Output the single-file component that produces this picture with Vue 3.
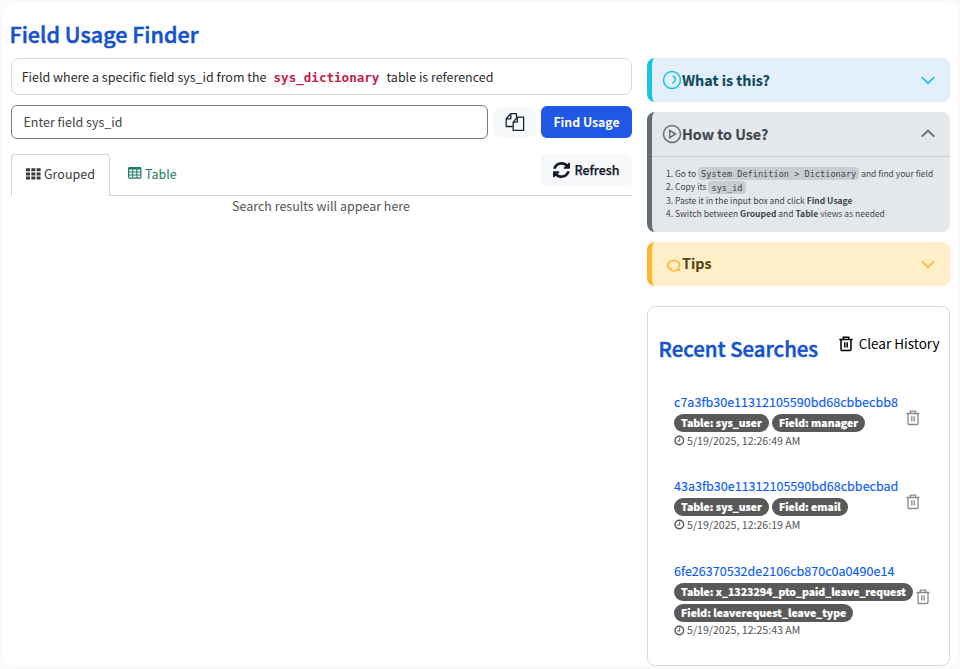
<script setup>
const searches = [
  { id: 'c7a3fb30e11312105590bd68cbbecbb8', table: 'sys_user', field: 'manager', time: '5/19/2025, 12:26:49 AM' },
  { id: '43a3fb30e11312105590bd68cbbecbad', table: 'sys_user', field: 'email', time: '5/19/2025, 12:26:19 AM' },
  { id: '6fe26370532de2106cb870c0a0490e14', table: 'x_1323294_pto_paid_leave_request', field: 'leaverequest_leave_type', time: '5/19/2025, 12:25:43 AM' },
]
</script>

<template>
  <div class="page">
    <main class="shell">
      <h1 class="title"><span>Field Usage Finder</span></h1>
      <div class="columns">
        <section class="left">
          <div class="info"><span class="t1">Field where a specific field sys_id from the</span><code>sys_dictionary</code><span class="t2">table is referenced</span></div>
          <div class="search">
            <div class="input"><span>Enter field sys_id</span></div>
            <button class="copy" aria-label="Copy">
              <svg width="20" height="20" viewBox="0 0 20 20" fill="none" stroke="currentColor" stroke-width="1.300" stroke-linejoin="round">
                <path d="M7.800 14.500H1.200V6.800L5.800 1.700H11.500V5.500M5.800 1.700V6.800H1.200" />
                <path d="M8.200 10.200L12.300 5.200H18.600V18.400H8.200ZM12.300 5.200V10.200H8.200" />
              </svg>
            </button>
            <button class="find"><span>Find Usage</span></button>
          </div>
          <div class="tabs">
            <div class="tab active">
              <svg width="15" height="12" viewBox="0 0 15 12" fill="currentColor">
                <path d="M0 .3h4v3H0zM5.300 .3h4v3h-4zM10.600 .3h4v3h-4zM0 4.400h4v3H0zM5.300 4.400h4v3h-4zM10.600 4.400h4v3h-4zM0 8.500h4v3H0zM5.300 8.500h4v3h-4zM10.600 8.500h4v3h-4z" />
              </svg>
              <span>Grouped</span>
            </div>
            <div class="tab link">
              <svg width="14" height="12" viewBox="0 0 14 12" fill="none" stroke="currentColor">
                <rect x=".6" y=".6" width="12.300" height="10.500" rx="1" stroke-width="1.200" />
                <path d="M.5 1.500H13" stroke-width="2" /><path d="M.5 5H13M.5 8H13M4.700 1V11M8.800 1V11" />
              </svg>
              <span>Table</span>
            </div>
            <div class="rest">
              <button class="refresh">
                <svg width="17" height="16" viewBox="0 0 1536 1536" preserveAspectRatio="none" fill="currentColor">
                  <path d="M1511 928q0 5-1 7-64 268-268 434.500T764 1536q-146 0-282.500-55T238 1324l-129 129q-19 19-45 19t-45-19-19-45V960q0-26 19-45t45-19h448q26 0 45 19t19 45-19 45l-137 137q71 66 161 102t187 36q134 0 250-65t186-179q11-17 53-117 8-23 30-23h192q13 0 22.500 9.500t9.500 22.500zm25-800v448q0 26-19 45t-45 19h-448q-26 0-45-19t-19-45 19-45l138-138Q969 256 768 256q-134 0-250 65T332 500q-11 17-53 117-8 23-30 23H50q-13 0-22.500-9.500T18 608v-7q65-268 270-434.500T768 0q146 0 284 55.500T1297 212l130-129q19-19 45-19t45 19 19 45z" />
                </svg>
                <span>Refresh</span>
              </button>
            </div>
          </div>
          <p class="empty"><span>Search results will appear here</span></p>
        </section>

        <aside class="right">
          <div class="panel blue">
            <header>
              <svg class="ico" width="20" height="20" viewBox="0 0 20 20" fill="none" stroke="currentColor" stroke-width="1.500"><circle cx="10" cy="10" r="8.500" /><path d="M10.500 6.500C12.200 6.300 13.500 7.600 13.300 9.300C13.200 11 12.200 12.300 10.500 13.300" /></svg>
              <h2><span>What is this?</span></h2>
              <svg class="chev" width="14" height="9" viewBox="0 0 14 9" fill="none" stroke="currentColor" stroke-width="1.800"><path d="M.8 1.200L7 7.300L13.200 1.200" /></svg>
            </header>
          </div>
          <div class="panel gray">
            <header>
              <svg class="ico" width="20" height="20" viewBox="0 0 20 20" fill="none" stroke="currentColor" stroke-width="1.500"><circle cx="10" cy="10" r="8.500" /><path d="M7.700 6.300V13.700L13.500 10Z" /></svg>
              <h2><span>How to Use?</span></h2>
              <svg class="chev" width="14" height="9" viewBox="0 0 14 9" fill="none" stroke="currentColor" stroke-width="1.800"><path d="M.8 7.600L7 1.500L13.200 7.600" /></svg>
            </header>
            <div class="steps">
              <div>1. Go to <code>System Definition &gt; Dictionary</code> and find your field</div>
              <div>2. Copy its <code>sys_id</code></div>
              <div>3. Paste it in the input box and click <b>Find Usage</b></div>
              <div>4. Switch between <b>Grouped</b> and <b>Table</b> views as needed</div>
            </div>
          </div>
          <div class="panel yellow">
            <header>
              <svg class="ico" width="20" height="20" viewBox="0 0 20 20" fill="none" stroke="currentColor" stroke-width="1.500"><path d="M7.600 14.500C3.800 12 6 6.800 11.500 6.600C17 6.500 19 11 16.500 13.700L17.300 16.200L14.500 15.800C12.500 17.200 10 17 8.600 15.800" /><path d="M5.800 12.800L10.200 14.700C9.600 16.700 5.600 16 5.800 12.800Z" fill="currentColor" stroke="none" /></svg>
              <h2><span>Tips</span></h2>
              <svg class="chev" width="14" height="9" viewBox="0 0 14 9" fill="none" stroke="currentColor" stroke-width="1.800"><path d="M.8 1.200L7 7.300L13.200 1.200" /></svg>
            </header>
          </div>

          <div class="recent">
            <div class="rhead">
              <h2><span>Recent Searches</span></h2>
              <button class="clear">
                <svg width="14" height="16" viewBox="0 0 14 16" fill="none" stroke="currentColor" stroke-width="1.500"><path d="M.3 3.500H13.700M4.300 3.500V1.200H9.700V3.500M2 3.500V13.600Q2 14.600 3 14.600H11Q12 14.600 12 13.600V3.500M5.800 6.300V11.500M8.200 6.300V11.500" /></svg>
                <span>Clear History</span>
              </button>
            </div>
            <div v-for="s in searches" :key="s.id" class="item">
              <div class="body">
                <a>{{ s.id }}</a>
                <div class="badges">
                  <span class="badge">Table: {{ s.table }}</span>
                  <span class="badge">Field: {{ s.field }}</span>
                </div>
                <div class="time">
                  <svg width="11" height="11" viewBox="0 0 11 11" fill="none" stroke="currentColor"><circle cx="5.300" cy="5.500" r="4.300" stroke-width="1.400" /><path d="M5.700 2.800V6H3.300" /></svg>
                  <span>{{ s.time }}</span>
                </div>
              </div>
              <svg class="del" width="14" height="16" viewBox="0 0 14 16" fill="none" stroke="currentColor" stroke-width="1.300"><path d="M.5 3.500H13.500M4.300 3.500V1.200H9.700V3.500M2 3.500V13.500Q2 14.500 3 14.500H11Q12 14.500 12 13.500V3.500M5.800 6.300V11.500M8.200 6.300V11.500" /></svg>
            </div>
          </div>
        </aside>
      </div>
    </main>
  </div>
</template>

<style>
body { margin: 0; background: #fafafa; }
</style>

<style scoped>
* { box-sizing: border-box; }
.page {
  height: 669px; padding: 2px 2px 3px 3px; background: #fafafa; overflow: hidden;
  font-family: "Noto Sans CJK SC", "Open Sans", sans-serif; font-size: 12.500px; line-height: 18px; color: #2e2e2e;
}
.shell { height: 664px; background: #fff; border-radius: 12px; padding: 17px 8px 0 6.500px; }
h1, h2, p { margin: 0; }
span, a, code { white-space: nowrap; }
button { border: 0; padding: 0; font: inherit; display: flex; align-items: center; justify-content: center; }
svg { flex: none; display: block; }
.title { height: 39px; line-height: 30px; font-size: 21.500px; font-weight: 500; color: #1453cc; -webkit-text-stroke: .5px #1453cc; }
.columns { display: flex; gap: 15px; padding-left: 1.500px; }
.left { width: 621px; }
.right { width: 303px; }
.info { height: 37px; border: 1px solid #dadada; border-radius: 8px; padding: 0 9.700px; display: flex; align-items: center; }
.info code { font: bold 12.570px "DejaVu Sans Mono", monospace; color: #c41e48; margin: 1px 7px 0; }
.search { display: flex; align-items: center; margin-top: 10px; height: 34px; }
.input { width: 477px; height: 34px; border: 1px solid #7d7d7d; border-radius: 6px; padding: 0 11.500px; display: flex; align-items: center; color: #444; }
.copy { width: 43px; height: 30px; margin: 0 5px; background: #f7f8fa; border-radius: 7px; color: #1c2233; }
.copy svg { margin-bottom: 1px; }
.find { width: 91px; height: 32px; background: #2058e5; color: #fff; border-radius: 6px; font-weight: 700; font-size: 12.300px; }
.tabs { display: flex; margin-top: 15px; height: 42px; }
.tab { display: flex; align-items: center; gap: 3px; border-bottom: 1px solid #d4d4d4; padding-bottom: 1.500px; }
.tab svg { margin-bottom: 1px; }
.active { width: 99px; border: 1px solid #d4d4d4; border-bottom: 0; border-radius: 4px 4px 0 0; padding: 0 0 3px 14px; color: #3a3a3a; }
.link { padding-left: 18px; color: #1d7b63; }
.rest { flex: 1; border-bottom: 1px solid #d4d4d4; display: flex; justify-content: flex-end; }
.refresh { width: 91px; height: 32px; gap: 4px; background: #f7f8fa; border-radius: 6px; color: #14192a; font-weight: 500; -webkit-text-stroke: .25px #14192a; }
.refresh svg { -webkit-text-stroke: 0; }
.empty { text-align: center; color: #555; line-height: 20px; padding-right: 1px; }
.panel { border-left: 5px solid; border-radius: 8px; margin-bottom: 10px; }
.panel header { height: 44px; display: flex; align-items: center; padding: 0 15px 0 10px; }
.panel h2 { flex: 1; font-size: 14.300px; line-height: 20px; font-weight: 700; -webkit-text-stroke: .15px; }
.blue { background: #e3effb; border-color: #17c1e8; color: #17c1e8; }
.blue h2 { color: #0b4b5c; }
.gray { background: #e4e8eb; border-color: #646d74; color: #646d74; height: 120px; }
.gray header { border-bottom: 1px solid #c6ccd1; height: 45px; padding-bottom: 1px; }
.gray h2 { color: #41464b; }
.yellow { background: #fff0ca; border-color: #ffb62e; color: #ffb62e; }
.yellow h2 { color: #5d4411; margin-bottom: 2px; }
.steps { padding: 9.500px 0 0 14px; font-size: 8.500px; line-height: 13.600px; color: #41464b; white-space: nowrap; }
.steps code { font: 8.600px/10px "DejaVu Sans Mono", monospace; background: #c9cdd1; border-radius: 4px; padding: 1.500px 3px; }
.recent { margin-top: 20px; height: 360px; border: 1px solid #dadada; border-radius: 8px; padding: 25px 9.500px 0 10.500px; }
.rhead { display: flex; justify-content: space-between; height: 60px; align-items: flex-start; }
.rhead h2 { font-size: 20.400px; line-height: 32px; font-weight: 500; color: #1453cc; -webkit-text-stroke: .5px #1453cc; }
.clear { background: none; gap: 6px; color: #000; height: 22px; font-size: 13.500px; }
.clear svg { margin-top: 1px; }
.item { display: flex; align-items: center; padding-left: 15.500px; margin-bottom: 27.400px; }
.body a { display: block; color: #0b5cf5; line-height: 19px; height: 22px; font-size: 12.550px; padding-right: 5px; -webkit-text-stroke: .15px #0b5cf5; }
.badges { display: flex; flex-wrap: wrap; gap: 3px; max-width: 239px; }
.badge { height: 18px; line-height: 18px; border-radius: 9px; padding: 0 7px; background: #595959; color: #fff; font-size: 10.430px; font-weight: 900; -webkit-text-stroke: .2px #fff; }
.time { display: flex; gap: 2px; align-items: center; height: 17px; font-size: 10.600px; color: #555; }
.del { color: #8a8a8a; margin: 0 0 5px 3px; }
</style>
